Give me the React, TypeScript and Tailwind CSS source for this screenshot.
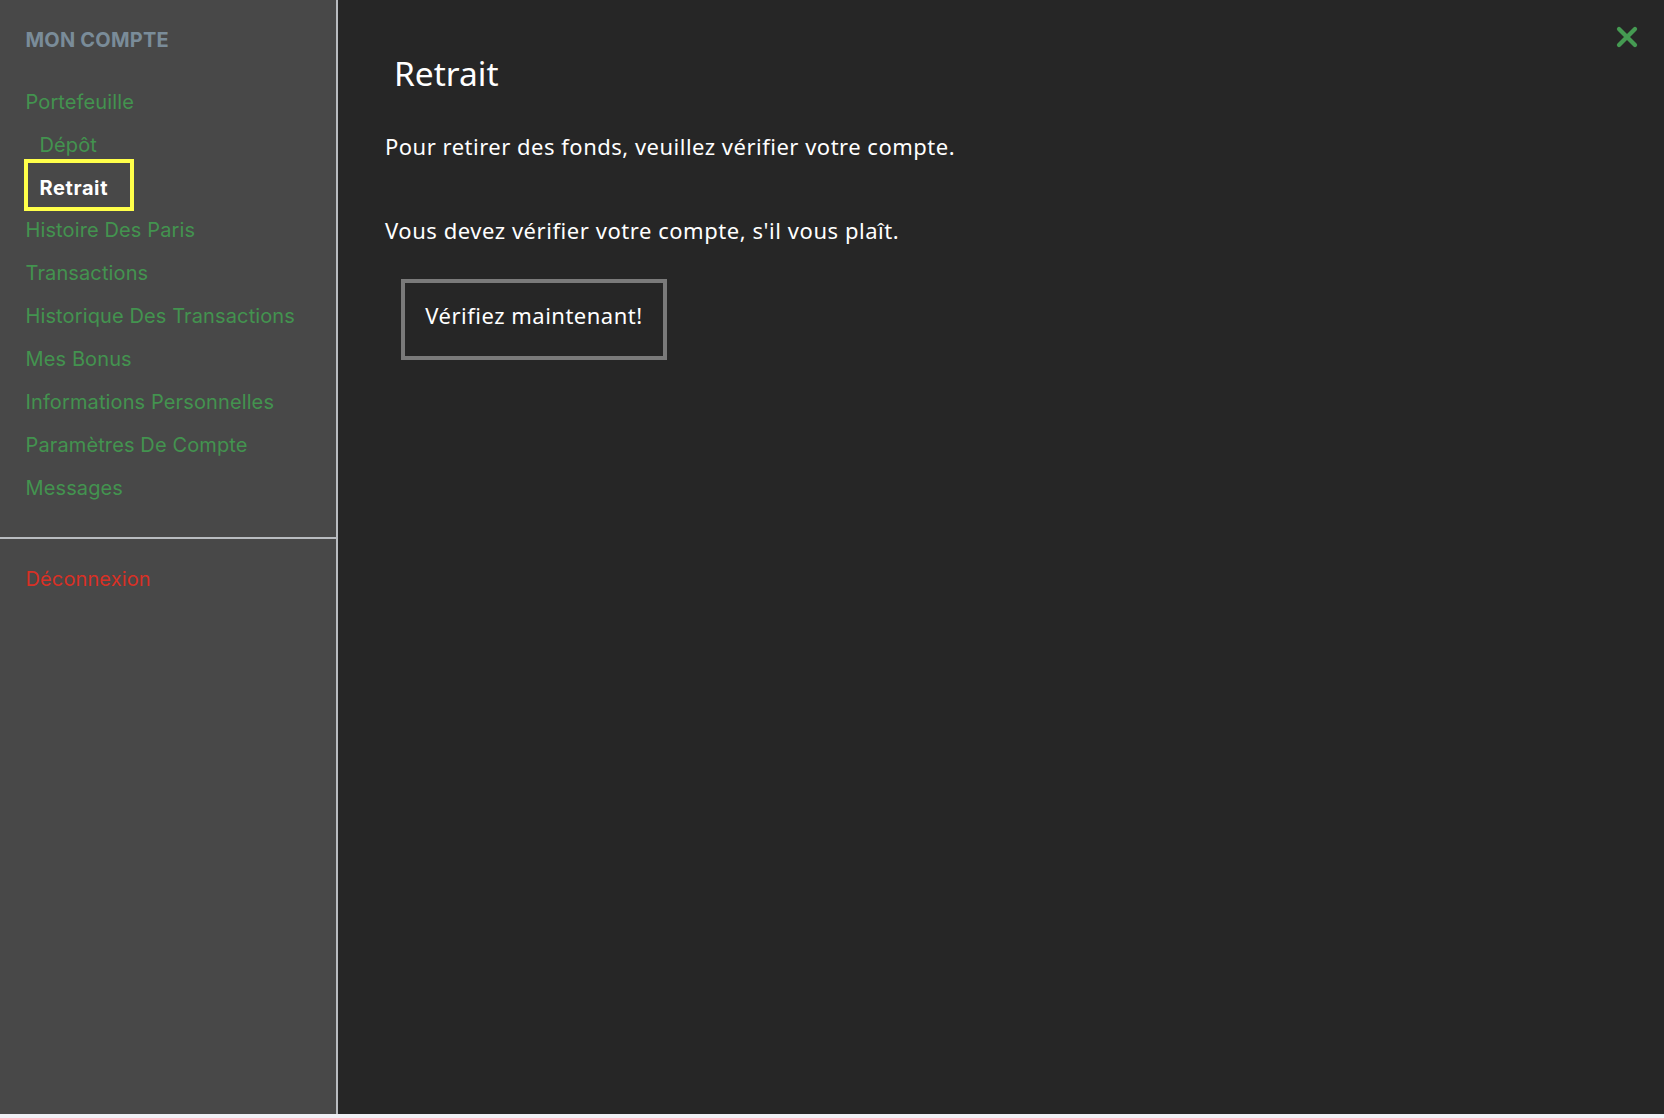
import React from 'react';
import { X } from 'lucide-react';

const links = [
  'Histoire Des Paris',
  'Transactions',
  'Historique Des Transactions',
  'Mes Bonus',
  'Informations Personnelles',
  'Paramètres De Compte',
  'Messages',
];

const linkClass = 'h-[43px] flex items-center text-[20px] tracking-[0.12px] text-[#43934f]';

export default function App() {
  return (
    <div className="h-[1118px] w-[1664px] overflow-hidden bg-[#f0f0f5] font-['Inter',sans-serif]">
      <div className="relative flex h-[1114px] bg-[#262626]">
        {/* Sidebar */}
        <aside className="flex w-[338px] shrink-0 flex-col border-r-2 border-[#b9bcc0] bg-[#484848]">
          <div className="px-[25.5px] pt-[26px]">
            <h2 className="text-[20px] leading-[28px] font-bold tracking-[0.2px] text-[#7a8c99]">MON COMPTE</h2>
            <nav className="mt-[26px] flex flex-col">
              <a className={linkClass}>Portefeuille</a>
              <a className={`${linkClass} pl-[14px]`}>Dépôt</a>
              <a className="-mt-[7px] -mb-[3px] -ml-[1.5px] flex h-[52px] w-[110px] items-center border-[4px] border-[#ffff4a] pt-[6px] pl-[11.5px] text-[20px] font-bold tracking-[0.6px] text-white">
                Retrait
              </a>
              {links.map((l) => (
                <a key={l} className={linkClass}>{l}</a>
              ))}
            </nav>
          </div>
          <div className="mt-[28px] border-t-2 border-[#b9bcc0] px-[25.5px] pt-[18px]">
            <a className="flex h-[43px] items-center text-[20px] tracking-[0.12px] text-[#d93025]">Déconnexion</a>
          </div>
        </aside>

        {/* Main */}
        <main className="flex-1 pl-[47px] pt-[49px] font-['Noto_Sans',sans-serif] text-white">
          <h1 className="pl-[9px] text-[33.5px] leading-[48px]">Retrait</h1>
          <p className="mt-[33px] text-[22px] leading-[32px] tracking-[0.5px]">Pour retirer des fonds, veuillez vérifier votre compte.</p>
          <p className="mt-[52px] text-[22px] leading-[32px] tracking-[0.55px]">Vous devez vérifier votre compte, s'il vous plaît.</p>
          <button className="mt-[33px] ml-[16px] block h-[81px] w-[266px] border-[4px] border-[#7a7a7a] pb-[8px] text-[22px] tracking-[0.5px]">
            Vérifiez maintenant!
          </button>
        </main>

        <button className="absolute top-[21px] right-[21px] text-[#459a52]">
          <X size={32} strokeWidth={3.2} />
        </button>
      </div>
    </div>
  );
}
